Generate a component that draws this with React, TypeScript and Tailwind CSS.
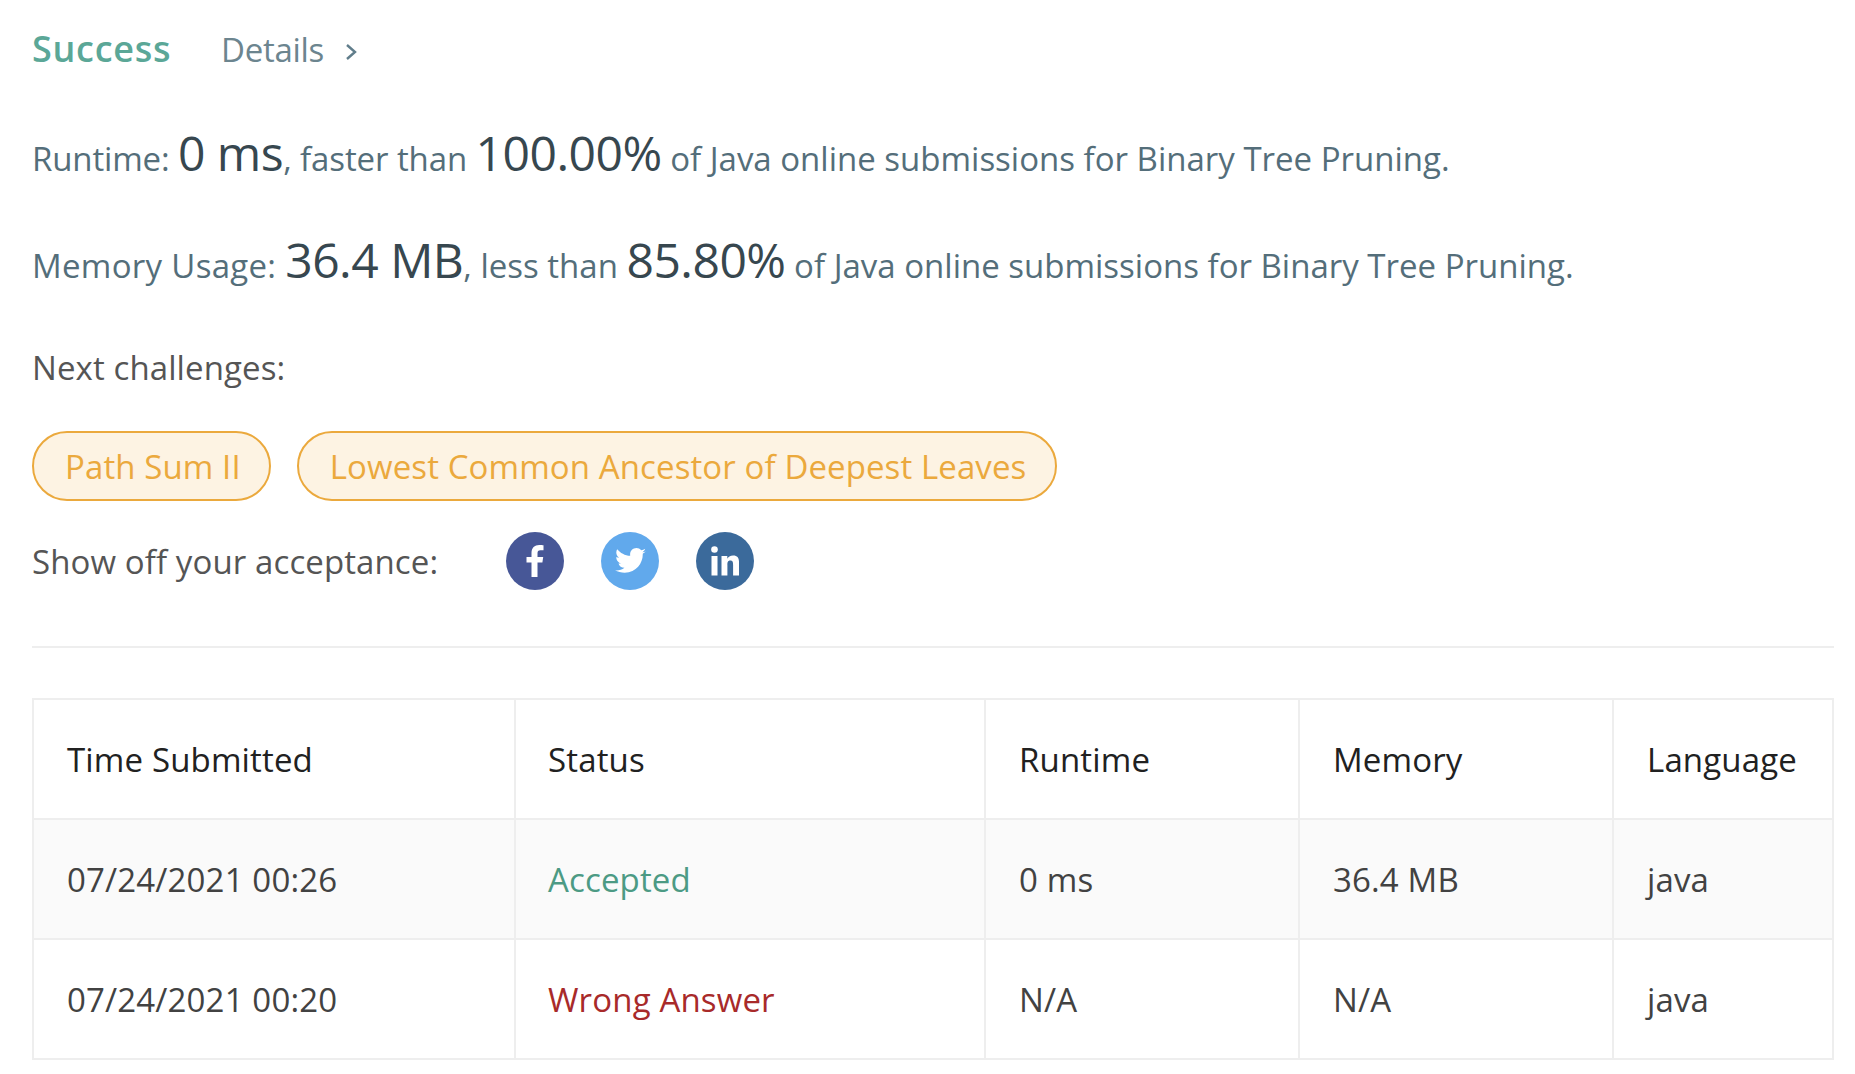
const rows = [
  { time: "07/24/2021 00:26", status: "Accepted", color: "text-[#4c9a84]", runtime: "0 ms", memory: "36.4 MB", bg: "bg-[#fafafa]" },
  { time: "07/24/2021 00:20", status: "Wrong Answer", color: "text-[#a82a2a]", runtime: "N/A", memory: "N/A", bg: "bg-white" },
];

function Stat({ label, big1, mid, big2, top, labelClass, midClass }: { label: string; big1: string; mid: string; big2: string; top: string; labelClass: string; midClass: string }) {
  return (
    <div className={`${top} h-[60px] flex items-baseline whitespace-pre text-[33px] tracking-[0px] text-[#546e7a]`}>
      <span className={labelClass}>{label} </span>
      <span className="text-[48px] tracking-[-0.5px] text-[#37474f]">{big1}</span>
      <span className={midClass}>{mid}</span>
      <span className="text-[48px] tracking-[-0.5px] text-[#37474f]">{big2}</span>
      <span> of Java online submissions for Binary Tree Pruning.</span>
    </div>
  );
}

const pills = [
  { text: "Path Sum II", cls: "pl-[31px] pr-[28px]" },
  { text: "Lowest Common Ancestor of Deepest Leaves", cls: "pl-[31px] pr-[29px]" },
];

export default function App() {
  return (
    <div
      className="w-[1855px] h-[1074px] bg-white overflow-hidden pl-[32px] pr-[21px] pt-[22px]"
      style={{ fontFamily: '"Open Sans", sans-serif' }}
    >
      <div className="flex items-baseline h-[56px]">
        <span className="text-[36px] font-semibold tracking-[0.7px] text-[#5ba797]">Success</span>
        <span className="ml-[50px] text-[33px] tracking-[-0.3px] text-[#6c858f]">Details</span>
        <svg className="ml-[21px] self-center mt-[3px]" width="13" height="18" viewBox="0 0 13 18" fill="none" stroke="#607d8b" strokeWidth="2.4">
          <path d="M2 2l8 7-8 7" />
        </svg>
      </div>

      <Stat top="mt-[39px]" label="Runtime:" big1="0 ms" mid=", faster than " big2="100.00%" labelClass="tracking-[-0.15px]" midClass="tracking-[-0.1px]" />
      <Stat top="mt-[47px]" label="Memory Usage:" big1="36.4 MB" mid=", less than " big2="85.80%" labelClass="tracking-[0.3px]" midClass="tracking-[0px]" />

      <div className="mt-[61px] text-[33px] tracking-[0.1px] text-[#555] leading-[46px]">Next challenges:</div>

      <div className="mt-[40px] flex gap-[26px]">
        {pills.map((p) => (
          <div
            key={p.text}
            className={`${p.cls} h-[70px] pt-[2px] rounded-[35px] border-2 border-[#eba93d] bg-[#fdf3e3] text-[#eba93d] text-[33px] tracking-[0.1px] flex items-center`}
          >
            {p.text}
          </div>
        ))}
      </div>

      <div className="mt-[31px] flex items-center h-[58px]">
        <span className="w-[474px] pt-[2px] text-[33px] tracking-[0.1px] text-[#555]">Show off your acceptance:</span>
        <div className="flex gap-[37px]">
          <div className="w-[58px] h-[58px] rounded-full bg-[#475797] flex items-center justify-center">
            <svg width="18" height="32" viewBox="0 0 18 32" fill="#fff">
              <path d="M5.5 32V17.5H0.5V12H5.5V8C5.5 2.8 8.6 0 13.2 0c1.9 0 3.5.2 4.3.3v5h-3c-2.4 0-3 1.2-3 2.9V12h5.7l-.8 5.5h-4.9V32z" />
            </svg>
          </div>
          <div className="w-[58px] h-[58px] rounded-full bg-[#61a9ec] flex items-center justify-center">
            <svg width="31" height="26" viewBox="0 0 24 20" fill="#fff">
              <path d="M24 2.4c-.9.4-1.8.7-2.8.8 1-.6 1.8-1.6 2.2-2.7-1 .6-2 1-3.1 1.2C19.3.6 18 0 16.600 0c-2.700 0-4.900 2.200-4.900 4.900 0 .4 0 .8.100 1.100C7.700 5.800 4.100 3.800 1.700.900c-.4.700-.7 1.600-.7 2.500 0 1.700.9 3.200 2.200 4.100-.8 0-1.600-.2-2.200-.6v.100c0 2.400 1.700 4.400 3.900 4.800-.4.100-.8.200-1.300.2-.3 0-.6 0-.9-.1.600 2 2.400 3.400 4.600 3.400-1.700 1.300-3.800 2.100-6.100 2.100-.4 0-.8 0-1.200-.1C2.200 18.200 4.800 19 7.500 19c9.100 0 14-7.500 14-14v-.6c1-.7 1.800-1.600 2.500-2z" />
            </svg>
          </div>
          <div className="w-[58px] h-[58px] rounded-full bg-[#3b6a9b] flex items-center justify-center">
            <svg width="28" height="30" viewBox="0 0 28 30" fill="#fff">
              <circle cx="3.500" cy="3.500" r="3.300" />
              <rect x="0.500" y="10" width="6" height="19.500" />
              <path d="M10.500 10h5.800v2.700c.9-1.600 2.900-3.200 5.800-3.200 5.500 0 6 3.700 6 8.300v11.700h-6V19.200c0-2.300 0-4.600-2.800-4.600s-2.900 2.200-2.900 4.500v10.400h-5.900z" />
            </svg>
          </div>
        </div>
      </div>

      <div className="mt-[56px] h-[2px] bg-[#eeeeee]" />

      <table className="mt-[50px] w-[1800px] table-fixed border-collapse text-[33px] tracking-[0.15px]">
        <colgroup>
          <col className="w-[482px]" />
          <col className="w-[470px]" />
          <col className="w-[314px]" />
          <col className="w-[314px]" />
          <col className="w-[220px]" />
        </colgroup>
        <thead>
          <tr className="h-[120px] text-[#212121]">
            {["Time Submitted", "Status", "Runtime", "Memory", "Language"].map((h, i) => (
              <th key={h} className={`border-2 border-[#eeeeee] pt-[2px] text-left font-normal whitespace-nowrap ${i === 1 ? "pl-[32px]" : "pl-[33px]"}`}>{h}</th>
            ))}
          </tr>
        </thead>
        <tbody>
          {rows.map((r) => (
            <tr key={r.time} className={`h-[120px] text-[#424242] ${r.bg}`}>
              <td className="border-2 border-[#eeeeee] pt-[2px] pl-[33px]">{r.time}</td>
              <td className={`border-2 border-[#eeeeee] pt-[2px] pl-[32px] ${r.color}`}>{r.status}</td>
              <td className="border-2 border-[#eeeeee] pt-[2px] pl-[33px]">{r.runtime}</td>
              <td className="border-2 border-[#eeeeee] pt-[2px] pl-[33px]">{r.memory}</td>
              <td className="border-2 border-[#eeeeee] pt-[2px] pl-[33px]">java</td>
            </tr>
          ))}
        </tbody>
      </table>
    </div>
  );
}
